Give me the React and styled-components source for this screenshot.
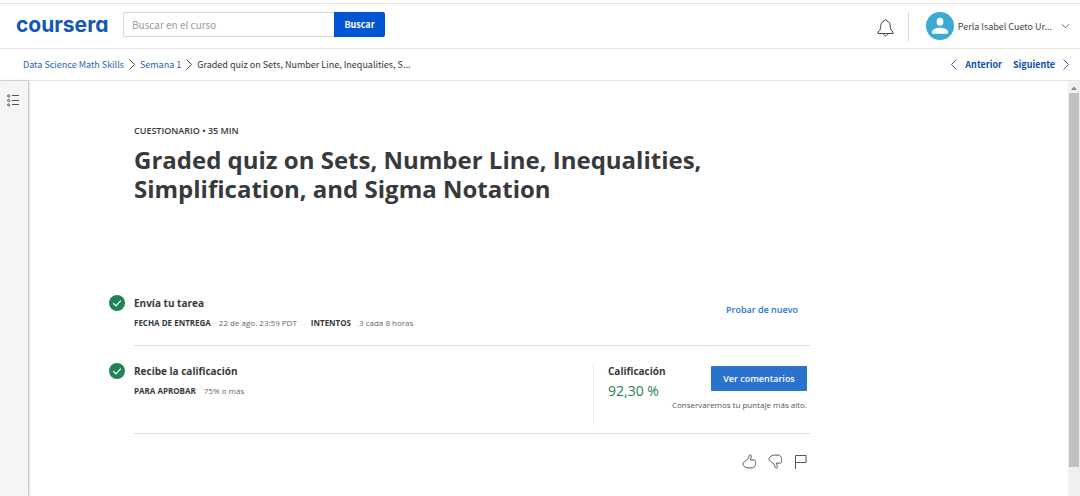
import React from "react";
import styled, { createGlobalStyle } from "styled-components";

const GlobalStyle = createGlobalStyle`
  *, *::before, *::after { box-sizing: border-box; }
  body {
    margin: 0;
    background: #fff;
    color: #373a3c;
    font-family: "Open Sans", sans-serif;
  }
  h1, h2, h3, p, dl, dd, ol { margin: 0; padding: 0; }
  svg { display: block; flex: none; }
  a { text-decoration: none; }
  button { display: block; border: 0; background: none; padding: 0; font: inherit; cursor: pointer; }
`;

const sourceSans = `"Noto Sans CJK SC", sans-serif`;

const Page = styled.div`
  min-height: 100vh;
  display: flex;
  flex-direction: column;
  padding-top: 3px;
`;

const TopBar = styled.header`
  height: 46px;
  display: flex;
  align-items: center;
  padding: 0 10px 0 16px;
  border-top: 1px solid #e5e5e5;
  border-bottom: 1px solid #e5e5e5;
  font-family: ${sourceSans};
`;

const Logo = styled.a`
  width: 107px;
  padding-bottom: 3px;
  color: #1356b4;
  font-family: Inter, sans-serif;
  font-size: 21px;
  font-weight: 700;
  line-height: 28px;
  font-feature-settings: "cv11";
`;

const SearchForm = styled.form`
  display: flex;
  height: 25px;
  width: 262px;
  margin-bottom: 4px;
`;

const SearchInput = styled.input`
  flex: 1;
  min-width: 0;
  border: 1px solid #d6d6d6;
  border-right: 0;
  border-radius: 2px 0 0 2px;
  padding: 0 8px;
  font-family: ${sourceSans};
  font-size: 10px;
  outline: none;
  &::placeholder { color: #9b9b9b; opacity: 1; }
`;

const SearchButton = styled.button`
  width: 51px;
  border-radius: 0 2px 2px 0;
  background: #0056d2;
  color: #fff;
  font-size: 9px;
  font-weight: 700;
`;

const Account = styled.div`
  display: flex;
  align-items: center;
  margin-left: auto;
`;

const BellButton = styled.button`
  margin: 3px 14px 0 0;
  color: #333;
`;

const UserButton = styled.button`
  display: flex;
  align-items: center;
  height: 29px;
  padding-left: 17px;
  border-left: 1px solid #d9d9d9;
  color: #444;
  font-size: 9px;
`;

const UserName = styled.span`
  margin: 0 9px 0 4px;
`;

const CrumbBar = styled.nav`
  height: 32px;
  display: flex;
  align-items: center;
  justify-content: space-between;
  padding: 0 9px 1px 23px;
  border-bottom: 1px solid #e5e5e5;
  font-family: ${sourceSans};
  font-size: 9px;
`;

const Crumbs = styled.ol`
  display: flex;
  align-items: center;
  gap: 3px;
  list-style: none;
  color: #333;
`;

const CrumbLink = styled.a`
  color: #2a62b8;
`;

const Pager = styled.div`
  display: flex;
  gap: 11px;
`;

const PagerLink = styled.a`
  display: flex;
  align-items: center;
  gap: 6px;
  color: #0d50b0;
  font-weight: 700;
`;

const Body = styled.div`
  flex: 1;
  display: flex;
`;

const Rail = styled.aside`
  width: 28px;
  padding: 13px 0 0 7px;
  background: #f5f5f5;
  box-shadow: 1px 0 2px rgba(0, 0, 0, 0.3);
`;

const RailButton = styled.button`
  color: #555;
`;

const Main = styled.main`
  flex: 1;
  padding: 42px 24px 24px 81px;
`;

const Content = styled.div`
  max-width: 701px;
`;

const Heading = styled.div`
  padding: 0 0 92px 25px;
`;

const Kicker = styled.p`
  font-size: 9px;
  font-weight: 600;
  line-height: 16px;
`;

const Title = styled.h1`
  max-width: 600px;
  margin-top: 6px;
  font-size: 24px;
  font-weight: 700;
  line-height: 29px;
`;

const Step = styled.section`
  display: flex;
  gap: 9px;
`;

const StepIcon = styled.div`
  padding-top: ${(p) => p.$top}px;
`;

const StepBody = styled.div`
  flex: 1;
  display: flex;
  justify-content: space-between;
  min-height: ${(p) => p.$height}px;
  padding-top: ${(p) => p.$top}px;
  border-bottom: 1px solid #dcdcdc;
`;

const StepTitle = styled.h2`
  font-size: 10px;
  font-weight: 700;
  line-height: 16px;
`;

const Facts = styled.dl`
  display: flex;
  gap: 14px;
  margin-top: 4px;
  font-size: 8px;
  line-height: 16px;
`;

const Fact = styled.div`
  display: flex;
  gap: 8px;
`;

const FactName = styled.dt`
  font-weight: 700;
`;

const FactValue = styled.dd`
  color: #666;
`;

const RetryButton = styled.button`
  align-self: flex-start;
  margin: 7px 12px 0 0;
  color: #2a73cc;
  font-size: 9px;
  font-weight: 600;
  line-height: 16px;
`;

const Grade = styled.div`
  display: flex;
  justify-content: space-between;
  width: 217px;
  height: 62px;
  padding: 0 3px 0 14px;
  border-left: 1px solid #f0f0f0;
`;

const Score = styled.div`
  flex: none;
  width: 56px;
  white-space: nowrap;
`;

const ScoreValue = styled.p`
  color: #1f8354;
  font-size: 14px;
  line-height: 24px;
`;

const Feedback = styled.div`
  display: flex;
  flex-direction: column;
  align-items: flex-end;
  margin-top: 3px;
`;

const FeedbackButton = styled.button`
  width: 96px;
  height: 25px;
  border-radius: 1px;
  background: #2a73cc;
  color: #fff;
  font-size: 9px;
  font-weight: 600;
`;

const Note = styled.p`
  margin-top: 6px;
  color: #555;
  font-size: 8px;
  line-height: 16px;
  white-space: nowrap;
`;

const Reactions = styled.div`
  display: flex;
  justify-content: flex-end;
  gap: 11px;
  padding: 20px 3px 0 0;
`;

const ReactionButton = styled.button`
  color: #444;
`;

const ScrollTrack = styled.div`
  width: 12px;
  display: flex;
  flex-direction: column;
  align-items: center;
  background: #f0f0f0;
`;

const ScrollArrow = styled.div`
  flex: none;
  height: 12px;
  padding-top: 5px;
  color: #8a8a8a;
`;

const ScrollThumb = styled.div`
  width: 10px;
  flex: 0 0 90%;
  background: #c1c1c1;
`;

const Chevron = ({ dir = "right", size = 10 }) => {
  const shapes = {
    right: "M2.5 0.5 7.5 5.5 2.5 10.5",
    left: "M7.5 0.5 2.5 5.5 7.5 10.5",
    down: "M1 3.5 5 7.5 9 3.5",
  };
  return (
    <svg width={size} height={size + 1} viewBox="0 0 10 11" fill="none" stroke="currentColor" strokeWidth="0.9" aria-hidden="true">
      <path d={shapes[dir]} />
    </svg>
  );
};

const CheckIcon = () => (
  <svg width="16" height="16" viewBox="0 0 16 16" aria-hidden="true">
    <circle cx="8" cy="8" r="8" fill="#1f8354" />
    <path d="M4.2 8.2 7 10.8 11.8 5.6" fill="none" stroke="#fff" strokeWidth="1.2" />
  </svg>
);

const BellIcon = () => (
  <svg width="17" height="18" viewBox="0 0 17 18" fill="none" stroke="currentColor" strokeWidth="0.9" aria-hidden="true">
    <path d="M1 14.5v-1.6c1.8-1 2.4-2.2 2.6-4.4.2-3.6.8-5.6 3.4-6.4 0-1.9 3-1.9 3 0 2.6.8 3.2 2.8 3.4 6.4.2 2.2.8 3.4 2.6 4.4v1.6z" />
    <path d="M6.5 14.8c.2 2.8 3.8 2.8 4 0" />
  </svg>
);

const Avatar = () => (
  <svg width="28" height="28" viewBox="0 0 28 28" aria-hidden="true">
    <circle cx="14" cy="14" r="14" fill="#3cabd4" />
    <ellipse cx="14" cy="9.8" rx="3.4" ry="4" fill="#fff" />
    <path d="M6 21.8v-1.9c0-2.6 4-4.2 8-4.2s8 1.6 8 4.2v1.9z" fill="#fff" />
  </svg>
);

const ListIcon = () => (
  <svg width="13" height="13" viewBox="0 0 13 13" fill="none" stroke="currentColor" aria-hidden="true">
    <circle cx="1.7" cy="2" r="1.1" />
    <circle cx="1.7" cy="6.5" r="1.1" />
    <circle cx="1.7" cy="11" r="1.1" />
    <path d="M5 1.5h7M5 6.5h7M5 10.5h7" />
  </svg>
);

const ThumbShape = () => (
  <path d="M3.6 6.9C5.3 5.9 6.6 4.3 7 2.2 7.4.2 9.5.4 9.3 2.4 9.2 3.8 8.7 4.8 8.2 5.9h3.6c1.6 0 2.2 1.4 1.500 2.300 .6.8.5 1.900 0 2.400.2.9-.2 1.500-.8 1.800-.3 1.100-.9 1.500-1.900 1.500H5.800c-1.300 0-2-.5-3-1.200C.3 11.200.3 8.400 3.600 6.900z" />
);

const ThumbUp = () => (
  <svg width="15" height="15" viewBox="0 0 15 15" fill="none" stroke="currentColor" strokeWidth="0.9" aria-hidden="true">
    <ThumbShape />
  </svg>
);

const ThumbDown = () => (
  <svg width="15" height="15" viewBox="0 0 15 15" fill="none" stroke="currentColor" strokeWidth="0.9" aria-hidden="true">
    <g transform="translate(0 15) scale(1 -1)">
      <ThumbShape />
    </g>
  </svg>
);

const Flag = () => (
  <svg width="13" height="15" viewBox="0 0 13 15" fill="none" stroke="currentColor" strokeWidth="0.9" aria-hidden="true">
    <path d="M1.5 15V1.5h10.6v7H1.5" />
  </svg>
);

export default function App() {
  return (
    <Page>
      <GlobalStyle />
      <TopBar>
        <Logo href="#">coursera</Logo>
        <SearchForm role="search">
          <SearchInput type="text" placeholder="Buscar en el curso" aria-label="Buscar en el curso" />
          <SearchButton type="button">Buscar</SearchButton>
        </SearchForm>
        <Account>
          <BellButton type="button" aria-label="Notificaciones"><BellIcon /></BellButton>
          <UserButton type="button">
            <Avatar />
            <UserName>Perla Isabel Cueto Ur...</UserName>
            <Chevron dir="down" size={9} />
          </UserButton>
        </Account>
      </TopBar>

      <CrumbBar>
        <Crumbs>
          <li><CrumbLink href="#">Data Science Math Skills</CrumbLink></li>
          <li><Chevron /></li>
          <li><CrumbLink href="#">Semana 1</CrumbLink></li>
          <li><Chevron /></li>
          <li>Graded quiz on Sets, Number Line, Inequalities, S...</li>
        </Crumbs>
        <Pager>
          <PagerLink href="#"><Chevron dir="left" />Anterior</PagerLink>
          <PagerLink href="#">Siguiente<Chevron /></PagerLink>
        </Pager>
      </CrumbBar>

      <Body>
        <Rail>
          <RailButton type="button" aria-label="Contenido"><ListIcon /></RailButton>
        </Rail>
        <Main>
          <Content>
            <Heading>
              <Kicker>CUESTIONARIO • 35 MIN</Kicker>
              <Title>Graded quiz on Sets, Number Line, Inequalities, Simplification, and Sigma Notation</Title>
            </Heading>

            <Step>
              <StepIcon $top={0}><CheckIcon /></StepIcon>
              <StepBody $height={51} $top={0}>
                <div>
                  <StepTitle>Envía tu tarea</StepTitle>
                  <Facts>
                    <Fact><FactName>FECHA DE ENTREGA</FactName><FactValue>22 de ago. 23:59 PDT</FactValue></Fact>
                    <Fact><FactName>INTENTOS</FactName><FactValue>3 cada 8 horas</FactValue></Fact>
                  </Facts>
                </div>
                <RetryButton type="button">Probar de nuevo</RetryButton>
              </StepBody>
            </Step>

            <Step>
              <StepIcon $top={17}><CheckIcon /></StepIcon>
              <StepBody $height={88} $top={17}>
                <div>
                  <StepTitle>Recibe la calificación</StepTitle>
                  <Facts>
                    <Fact><FactName>PARA APROBAR</FactName><FactValue>75% o más</FactValue></Fact>
                  </Facts>
                </div>
                <Grade>
                  <Score>
                    <StepTitle as="h3">Calificación</StepTitle>
                    <ScoreValue>92,30 %</ScoreValue>
                  </Score>
                  <Feedback>
                    <FeedbackButton type="button">Ver comentarios</FeedbackButton>
                    <Note>Conservaremos tu puntaje más alto.</Note>
                  </Feedback>
                </Grade>
              </StepBody>
            </Step>

            <Reactions>
              <ReactionButton type="button" aria-label="Me gusta"><ThumbUp /></ReactionButton>
              <ReactionButton type="button" aria-label="No me gusta"><ThumbDown /></ReactionButton>
              <ReactionButton type="button" aria-label="Informar"><Flag /></ReactionButton>
            </Reactions>
          </Content>
        </Main>
        <ScrollTrack aria-hidden="true">
          <ScrollArrow>
            <svg width="6" height="4" viewBox="0 0 6 4"><path d="M0 4 3 0.5 6 4z" fill="currentColor" /></svg>
          </ScrollArrow>
          <ScrollThumb />
        </ScrollTrack>
      </Body>
    </Page>
  );
}
